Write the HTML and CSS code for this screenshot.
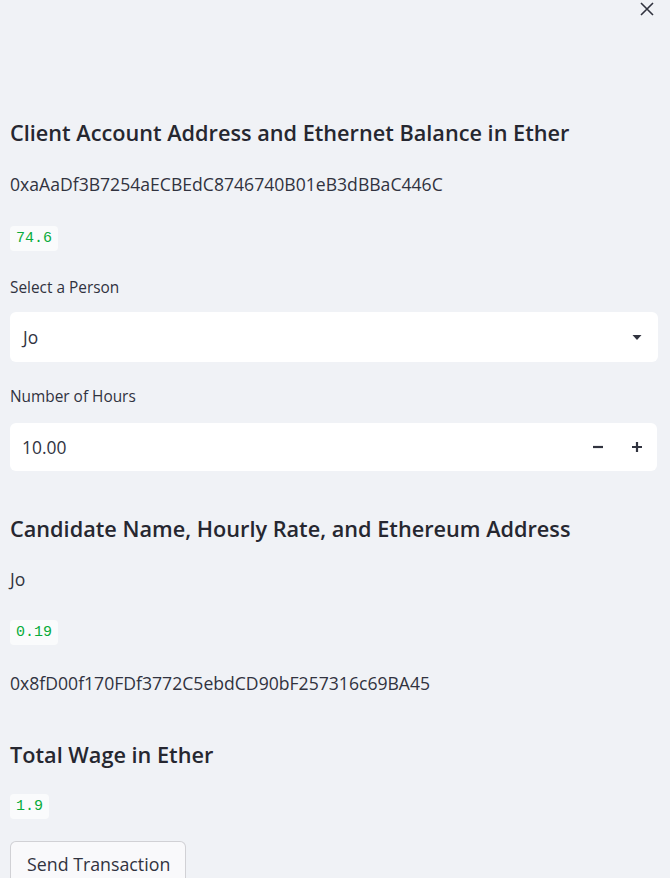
FILE: index.html
```html
<!DOCTYPE html>
<html>
<head>
<meta charset="utf-8">
<link rel="stylesheet" href="styles.css">
</head>
<body>
<aside class="sidebar">
  <button class="close" aria-label="Close">
    <svg width="16" height="16" viewBox="0 0 16 16"><path d="M2 2 L14 14 M14 2 L2 14" stroke="#31333f" stroke-width="1.6" fill="none"/></svg>
  </button>
  <h3 class="heading h1">Client Account Address and Ethernet Balance in Ether</h3>
  <p class="text addr1">0xaAaDf3B7254aECBEdC8746740B01eB3dBBaC446C</p>
  <div class="codewrap c1"><code class="code">74.6</code></div>
  <label class="label l1">Select a Person</label>
  <div class="select">
    <span class="value">Jo</span>
    <svg class="caret" width="12" height="12" viewBox="0 0 12 12"><path d="M1.5 4 L10.5 4 L6 9 Z" fill="#31333f"/></svg>
  </div>
  <label class="label l2">Number of Hours</label>
  <div class="number">
    <span class="value">10.00</span>
    <div class="steps">
      <span class="step">
        <svg width="12" height="12" viewBox="0 0 12 12"><path d="M1 6 H11" stroke="#31333f" stroke-width="2.2"/></svg>
      </span>
      <span class="step">
        <svg width="12" height="12" viewBox="0 0 12 12"><path d="M1 6 H11 M6 1 V11" stroke="#31333f" stroke-width="2.2"/></svg>
      </span>
    </div>
  </div>
  <h3 class="heading h2">Candidate Name, Hourly Rate, and Ethereum Address</h3>
  <p class="text name">Jo</p>
  <div class="codewrap c2"><code class="code">0.19</code></div>
  <p class="text addr2">0x8fD00f170FDf3772C5ebdCD90bF257316c69BA45</p>
  <h3 class="heading h3">Total Wage in Ether</h3>
  <div class="codewrap c3"><code class="code">1.9</code></div>
  <button class="send">Send Transaction</button>
</aside>
</body>
</html>
```
FILE: styles.css
```css
html, body {
  margin: 0;
  padding: 0;
  background: #f0f2f6;
  height: 100%;
  overflow: hidden;
}
.sidebar {
  position: relative;
  display: flex;
  flex-direction: column;
  align-items: flex-start;
  padding: 0 12px 0 10px;
  font-family: "Open Sans", Lato, sans-serif;
  color: #31333f;
}
.close {
  position: absolute;
  top: 0;
  right: 14px;
  width: 18px;
  height: 18px;
  padding: 0;
  border: none;
  background: none;
  display: flex;
  align-items: center;
  justify-content: center;
}
.heading {
  margin: 0;
  font-size: 21.7px;
  font-weight: 600;
  line-height: 36px;
  color: #262730;
}
.h1 { margin-top: 115px; }
.h2 { margin-top: 40px; }
.h3 { margin-top: 42px; }
.text {
  margin: 0;
  font-size: 17.6px;
  line-height: 24px;
}
.addr1 { margin-top: 21px; }
.name { margin-top: 20px; }
.addr2 { margin-top: 26px; }
.codewrap {
  background: #fafbfc;
  border-radius: 4px;
  height: 25px;
  padding: 0 6px;
  display: flex;
  align-items: center;
}
.code {
  font-family: "Liberation Mono", "DejaVu Sans Mono", monospace;
  font-size: 15px;
  color: #09ab3b;
}
.c1 { margin-top: 30px; }
.c2 { margin-top: 29px; }
.c3 { margin-top: 21px; }
.label {
  font-size: 15.4px;
  line-height: 20px;
}
.l1 { margin-top: 27px; }
.l2 { margin-top: 25px; }
.select, .number {
  align-self: stretch;
  background: #ffffff;
  border-radius: 6px;
  display: flex;
  align-items: center;
  justify-content: space-between;
  box-sizing: border-box;
}
.select {
  margin-top: 14px;
  height: 50px;
  padding: 0 15px 0 13px;
}
.number {
  margin-top: 16px;
  height: 48px;
  padding: 0 14px 0 12px;
  margin-right: 1px;
}
.value {
  font-size: 17.4px;
}
.steps {
  display: flex;
  gap: 27px;
}
.step {
  display: flex;
}
.send {
  margin-top: 22px;
  height: 46px;
  padding: 0 15px 0 16px;
  background: #f9f9fb;
  border: 1px solid rgba(49, 51, 63, 0.2);
  border-radius: 6px;
  font-family: "Open Sans", Lato, sans-serif;
  font-size: 17.8px;
  color: #31333f;
  display: flex;
  align-items: center;
}
```
